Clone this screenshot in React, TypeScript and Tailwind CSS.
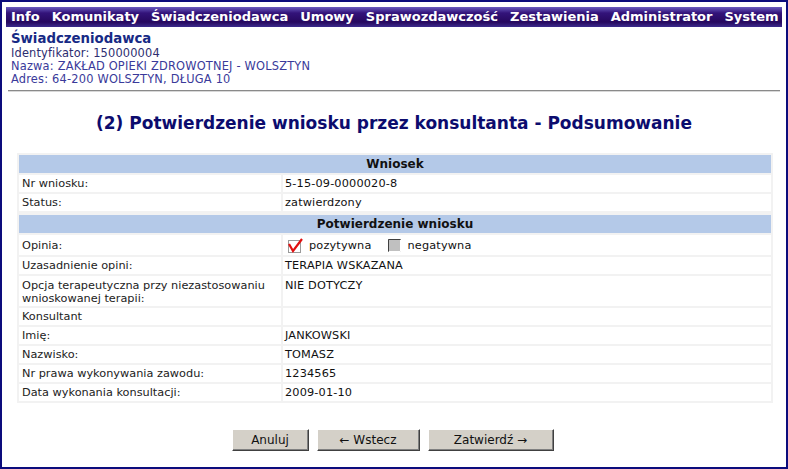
const menu = [
  "Info",
  "Komunikaty",
  "Świadczeniodawca",
  "Umowy",
  "Sprawozdawczość",
  "Zestawienia",
  "Administrator",
  "System",
];

const font = "font-['Verdana','DejaVu_Sans',sans-serif]";

function Row({
  label,
  value,
  h = "h-[17px]",
  top = false,
}: {
  label: React.ReactNode;
  value?: React.ReactNode;
  h?: string;
  top?: boolean;
}) {
  return (
    <div className={`grid grid-cols-[262px_1fr] gap-[2px] ${h}`}>
      <div
        className={`bg-white pl-[3px] text-[11.3px] leading-[13px] text-[#222] flex whitespace-nowrap ${
          top ? "items-start pt-[3px]" : "items-center"
        }`}
      >
        {label}
      </div>
      <div
        className={`bg-white pl-[2px] text-[11.3px] leading-[13px] text-[#111] flex tracking-[0.15px] ${
          top ? "items-start pt-[3px]" : "items-center"
        }`}
      >
        {value}
      </div>
    </div>
  );
}

function Header({ title }: { title: string }) {
  return (
    <div className="h-[18px] bg-[#b4c9e8] flex items-center justify-center text-[12px] font-bold text-[#111]">
      {title}
    </div>
  );
}

function CheckedBox() {
  return (
    <svg width="17" height="15" viewBox="0 0 17 15" className="shrink-0">
      <rect x="1.5" y="2.5" width="12" height="12" fill="#fff" stroke="#9a9a9a" />
      <path d="M2 6 L6 13 L15 1" fill="none" stroke="#e01010" strokeWidth="2.2" />
    </svg>
  );
}

function GrayBox() {
  return (
    <svg width="13" height="13" viewBox="0 0 13 13" className="shrink-0">
      <rect x="0" y="0" width="13" height="13" fill="#c0c0c0" />
      <path d="M0.5 12.5 V0.5 H12.5" fill="none" stroke="#404040" />
      <path d="M1 12.5 H12.5 V1" fill="none" stroke="#ffffff" />
    </svg>
  );
}

function Btn({ w, children }: { w: string; children: React.ReactNode }) {
  return (
    <button
      type="button"
      className={`${w} h-[22px] bg-[#d4d0c8] border border-t-white border-l-white border-r-[#404040] border-b-[#404040] shadow-[inset_-1px_-1px_0_#808080] text-[12px] text-[#111] flex items-center justify-center`}
    >
      {children}
    </button>
  );
}

export default function App() {
  return (
    <div
      className={`${font} w-[788px] h-[469px] bg-white border-2 border-[#0c0c7c] flex flex-col px-[4px] pt-[5px] overflow-hidden`}
    >
      <nav className="h-[20px] bg-[linear-gradient(#6a5cc0_0%,#33137a_30%,#26085e_75%,#3c2a8c_100%)] flex items-center gap-[12px] pl-[5px] text-[13px] font-bold text-white whitespace-nowrap">
        {menu.map((m) => (
          <span key={m}>{m}</span>
        ))}
      </nav>

      <div className="pl-[5px] pt-[4px]">
        <div className="text-[13.3px] font-bold text-[#172a85] leading-[16px]">
          Świadczeniodawca
        </div>
        <div className="text-[11.4px] leading-[13px] text-[#2d2d70] tracking-[0.15px]">
          Identyfikator: 150000004
        </div>
        <div className="text-[11.4px] leading-[13px] text-[#3a3a9a] tracking-[0.2px]">
          Nazwa: ZAKŁAD OPIEKI ZDROWOTNEJ - WOLSZTYN
        </div>
        <div className="text-[11.4px] leading-[13px] text-[#3a3a9a] tracking-[0.2px]">
          Adres: 64-200 WOLSZTYN, DŁUGA 10
        </div>
      </div>

      <div className="mt-[4px] mx-[2px] border-t border-t-[#8a8a8a] border-b border-b-[#d8d8d8]" />

      <h1 className="mt-[20px] text-center text-[17px] font-bold text-[#0c0c6e] leading-[22px]">
        (2) Potwierdzenie wniosku przez konsultanta - Podsumowanie
      </h1>

      <div className="mt-[19px] ml-[11px] w-[756px] bg-[#f2f2f2] p-[2px] flex flex-col gap-[2px]">
        <Header title="Wniosek" />
        <Row label="Nr wniosku:" value="5-15-09-0000020-8" />
        <Row label="Status:" value="zatwierdzony" />
        <div className="mt-[2px]">
          <Header title="Potwierdzenie wniosku" />
        </div>
        <Row
          h="h-[20px]"
          label="Opinia:"
          value={
            <div className="flex items-center pl-[2px]">
              <CheckedBox />
              <span className="ml-[5px]">pozytywna</span>
              <span className="ml-[16px]">
                <GrayBox />
              </span>
              <span className="ml-[7px]">negatywna</span>
            </div>
          }
        />
        <Row label="Uzasadnienie opini:" value="TERAPIA WSKAZANA" />
        <Row
          h="h-[30px]"
          top
          label={
            <span>
              Opcja terapeutyczna przy niezastosowaniu
              <br />
              wnioskowanej terapii:
            </span>
          }
          value="NIE DOTYCZY"
        />
        <Row label="Konsultant" value="" />
        <Row label="Imię:" value="JANKOWSKI" />
        <Row label="Nazwisko:" value="TOMASZ" />
        <Row label="Nr prawa wykonywania zawodu:" value="1234565" />
        <Row label="Data wykonania konsultacji:" value="2009-01-10" />
      </div>

      <div className="mt-[26px] flex justify-center gap-[8px] pr-[3px]">
        <Btn w="w-[77px]">Anuluj</Btn>
        <Btn w="w-[103px]">← Wstecz</Btn>
        <Btn w="w-[126px]">Zatwierdź →</Btn>
      </div>
    </div>
  );
}
